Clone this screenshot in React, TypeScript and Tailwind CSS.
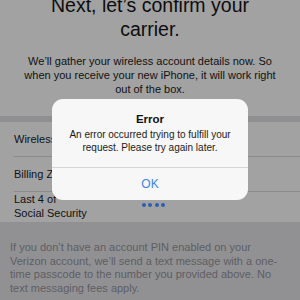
import React from 'react';

const font = { fontFamily: '"Liberation Sans", Arial, sans-serif' };

function Row({ children, last }: { children: React.ReactNode; last?: boolean }) {
  return (
    <div className="pl-[14px]">
      <div className={last ? 'h-[30px]' : 'h-[35px] flex items-center border-b border-[#8b8b8d]'}>{children}</div>
    </div>
  );
}

function ErrorAlert() {
  return (
    <div className="absolute left-[52px] top-[99px] w-[196px] h-[101px] rounded-[11px] bg-[#f7f7f7] flex flex-col">
      <div className="h-[69px] flex flex-col items-center pt-[13px] border-b border-[#d6d6d8]">
        <div className="text-[11.5px] font-bold leading-[14px] text-[#111]">Error</div>
        <div className="text-[10px] leading-[12.5px] text-[#1a1a1a] text-center mt-[3px]">
          An error occurred trying to fulfill your
          <br />
          request. Please try again later.
        </div>
      </div>
      <div className="flex-1 flex items-center justify-center text-[12px] leading-none text-[#3b86ec]">OK</div>
    </div>
  );
}

export default function App() {
  return (
    <div className="relative w-[300px] h-[300px] overflow-hidden bg-[#a2a2a2]" style={font}>
      <div className="-mt-[7px]">
        <h1 className="text-[19.5px] leading-[24px] text-center text-[#0d0d0d] font-normal">
          Next, let’s confirm your
          <br />
          carrier.
        </h1>
        <p className="mt-[13px] text-[11px] leading-[14px] text-center text-[#111]">
          We’ll gather your wireless account details now. So
          <br />
          when you receive your new iPhone, it will work right
          <br />
          out of the box.
        </p>
      </div>

      <div className="mt-[20px] h-[6px] bg-[#8f8f91]" />

      <div className="text-[11px] text-[#111]">
        <Row>Wireless</Row>
        <Row>Billing ZIP</Row>
        <Row last>
          <div className="flex">
            <div className="leading-[14px]">
              Last 4 of
              <br />
              Social Security
            </div>
            <div className="ml-[55px] mt-[11px] flex gap-[2.4px]">
              <div className="w-[4px] h-[4px] rounded-full bg-[#2d5fb0]" />
              <div className="w-[4px] h-[4px] rounded-full bg-[#2d5fb0]" />
              <div className="w-[4px] h-[4px] rounded-full bg-[#2d5fb0]" />
              <div className="w-[4px] h-[4px] rounded-full bg-[#2d5fb0]" />
            </div>
          </div>
        </Row>
      </div>

      <div className="bg-[#919194] h-[100px] pt-[19px] pl-[10px] text-[11px] leading-[13.7px] text-[#5e5e62]">
        If you don’t have an account PIN enabled on your
        <br />
        Verizon account, we’ll send a text message with a one-
        <br />
        time passcode to the number you provided above. No
        <br />
        text messaging fees apply.
      </div>

      <ErrorAlert />
    </div>
  );
}
